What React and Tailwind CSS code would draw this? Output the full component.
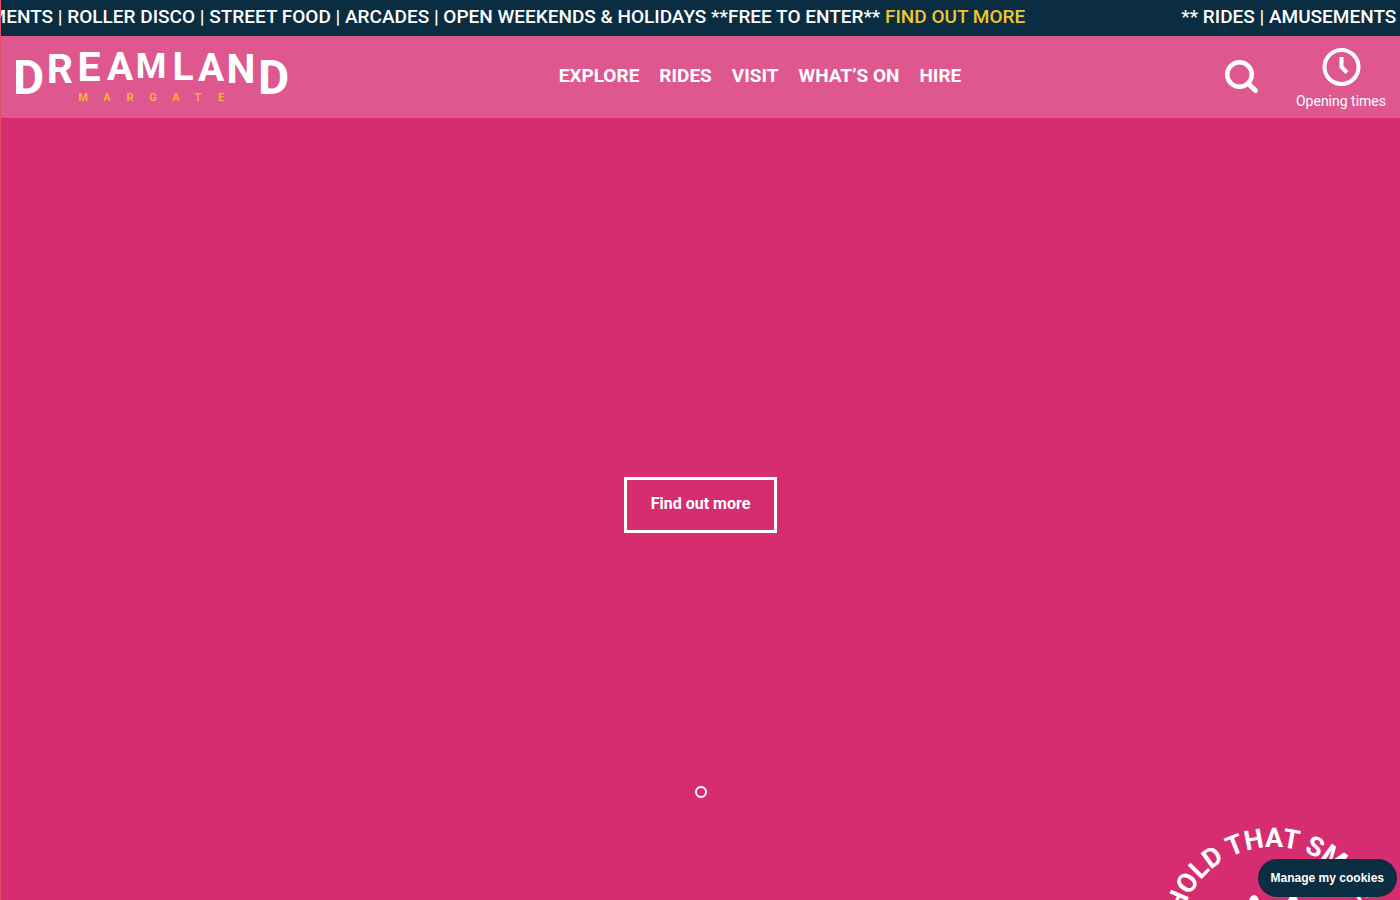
import React from 'react';

const NAV_LINKS = ['EXPLORE', 'RIDES', 'VISIT', 'WHAT’S ON', 'HIRE'];

function TickerItem() {
  return (
    <p className="shrink-0 whitespace-pre pr-[156px]">
      {'** RIDES | AMUSEMENTS | ROLLER DISCO | STREET FOOD | ARCADES | OPEN WEEKENDS & HOLIDAYS **FREE TO ENTER** '}
      <a href="#tickets" className="text-[#f0c62f]">FIND OUT MORE</a>
    </p>
  );
}

function Ticker() {
  return (
    <div className="flex h-9 overflow-hidden bg-[#0b2d41] text-[19px] leading-[34px] font-medium text-white">
      <div className="-ml-[163px] flex">
        <TickerItem />
        <TickerItem />
      </div>
    </div>
  );
}

function Logo() {
  return (
    <a href="#home" aria-label="Dreamland Margate" className="w-[280px]">
      <svg width="272" height="54" viewBox="0 0 272 54" fill="white" className="font-bold">
        <g fontSize="48">
          <text x="-3" y="44">D</text>
          <text x="242" y="44">D</text>
        </g>
        <g fontSize="39" textAnchor="middle">
          <text x="44" y="33" fontSize="41">R</text>
          <text x="73" y="31" fontSize="41">E</text>
          <text x="104" y="30">A</text>
          <text x="135" y="28" fontSize="35">M</text>
          <text x="167" y="30">L</text>
          <text x="195" y="31">A</text>
          <text x="225" y="33" fontSize="41">N</text>
        </g>
        <g fontSize="11" fill="#f9b233" textAnchor="middle">
          <text x="67" y="51">M</text>
          <text x="91" y="51">A</text>
          <text x="114" y="51">R</text>
          <text x="137" y="51">G</text>
          <text x="160" y="51">A</text>
          <text x="182" y="51">T</text>
          <text x="205" y="51">E</text>
        </g>
      </svg>
    </a>
  );
}

function Header() {
  return (
    <header className="flex h-[82px] items-center justify-between bg-[#de578f] pr-3.5 pl-[15px] text-white">
      <Logo />
      <nav className="flex gap-5 pb-0.5 text-[19px] leading-6 font-bold">
        {NAV_LINKS.map((label) => (
          <a key={label} href="#menu">{label}</a>
        ))}
      </nav>
      <div className="flex items-center justify-end gap-9">
        <button type="button" aria-label="Search">
          <svg width="36" height="36" viewBox="0 0 36 36" fill="none" stroke="white" strokeWidth="4.5" strokeLinecap="round">
            <circle cx="15.5" cy="15.5" r="12.3" />
            <path d="M25 25.5 L31.5 31.5" strokeWidth="5" />
          </svg>
        </button>
        <a href="#opening-times" className="flex flex-col items-center gap-0.5 pt-1.5 text-sm leading-6">
          <svg width="40" height="40" viewBox="0 0 40 40" fill="none" stroke="white" strokeWidth="4">
            <circle cx="20.5" cy="20" r="17" />
            <path d="M20.5 10 V20 L26 25.5" />
          </svg>
          Opening times
        </a>
      </div>
    </header>
  );
}

function SmileBadge() {
  return (
    <svg width="240" height="85" viewBox="0 0 240 85" className="absolute right-0 bottom-0" fill="white">
      <path id="badge-arc" d="M18 127 A95 95 0 0 1 208 127" fill="none" />
      <text fontSize="27" className="font-bold">
        <textPath href="#badge-arc" startOffset="29">HOLD THAT SMILE</textPath>
      </text>
      <ellipse cx="94" cy="92" rx="6" ry="12" />
      <ellipse cx="133" cy="92" rx="6" ry="12" />
    </svg>
  );
}

export default function App() {
  return (
    <div className="relative flex min-h-screen flex-col overflow-hidden border-l border-[#e0506a] bg-[#d62d70] font-[Roboto,sans-serif]">
      <Ticker />
      <Header />
      <main className="flex grow flex-col items-center justify-end">
        <a href="#find-out-more" className="border-3 border-white px-6 pt-3.5 pb-4 text-base leading-5 font-bold text-white">
          Find out more
        </a>
        <button
          type="button"
          aria-label="Slide 1"
          className="mt-[253px] mb-[102px] size-3 rounded-full border-2 border-white"
        />
      </main>
      <SmileBadge />
      <button
        type="button"
        className="absolute right-[3px] bottom-[3px] h-[38px] rounded-full bg-[#0b2d41] px-[13px] font-[Liberation_Sans,sans-serif] text-xs font-bold text-white"
      >
        Manage my cookies
      </button>
    </div>
  );
}
